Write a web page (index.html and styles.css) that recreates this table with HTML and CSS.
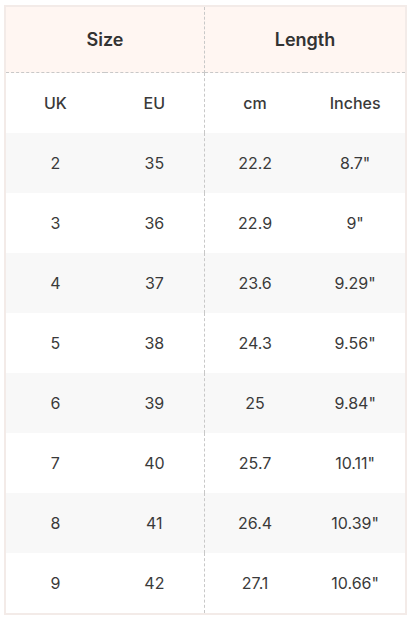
FILE: index.html
```html
<!DOCTYPE html>
<html>
<head>
<meta charset="utf-8">
<link rel="stylesheet" href="styles.css">
</head>
<body>
<table class="size-table">
  <colgroup>
    <col class="col-a">
    <col class="col-a">
    <col class="col-b">
    <col class="col-b">
  </colgroup>
  <thead>
    <tr class="group-row">
      <th colspan="2" class="split">Size</th>
      <th colspan="2">Length</th>
    </tr>
  </thead>
  <tbody>
    <tr class="unit-row"><td>UK</td><td class="split">EU</td><td>cm</td><td>Inches</td></tr>
    <tr class="alt"><td>2</td><td class="split">35</td><td>22.2</td><td>8.7"</td></tr>
    <tr><td>3</td><td class="split">36</td><td>22.9</td><td>9"</td></tr>
    <tr class="alt"><td>4</td><td class="split">37</td><td>23.6</td><td>9.29"</td></tr>
    <tr><td>5</td><td class="split">38</td><td>24.3</td><td>9.56"</td></tr>
    <tr class="alt"><td>6</td><td class="split">39</td><td>25</td><td>9.84"</td></tr>
    <tr><td>7</td><td class="split">40</td><td>25.7</td><td>10.11"</td></tr>
    <tr class="alt"><td>8</td><td class="split">41</td><td>26.4</td><td>10.39"</td></tr>
    <tr><td>9</td><td class="split">42</td><td>27.1</td><td>10.66"</td></tr>
  </tbody>
</table>
</body>
</html>
```
FILE: styles.css
```css
html, body {
  margin: 0;
  padding: 0;
  background: #ffffff;
}
body {
  padding: 5px 0 0 4px;
  font-family: Inter, "Noto Sans", sans-serif;
  color: #333333;
}
.size-table {
  width: 403px;
  border-collapse: collapse;
  table-layout: fixed;
  border: 2px solid #f3ebe8;
}
.col-a {
  width: 99px;
}
.col-b {
  width: 100px;
}
.size-table th,
.size-table td {
  text-align: center;
  padding: 0;
}
.group-row th {
  height: 65px;
  background: #fff6f2;
  font-size: 18px;
  font-weight: 600;
  color: #333;
  border-bottom: 1px dashed #c8c8c8;
}
.size-table td {
  height: 60px;
  font-size: 16px;
  font-weight: 400;
  color: #3a3a3a;
}
.unit-row td {
  font-weight: 500;
}
.size-table .split {
  border-right: 1px dashed #c8c8c8;
}
.alt td {
  background: #f8f8f8;
}
```
